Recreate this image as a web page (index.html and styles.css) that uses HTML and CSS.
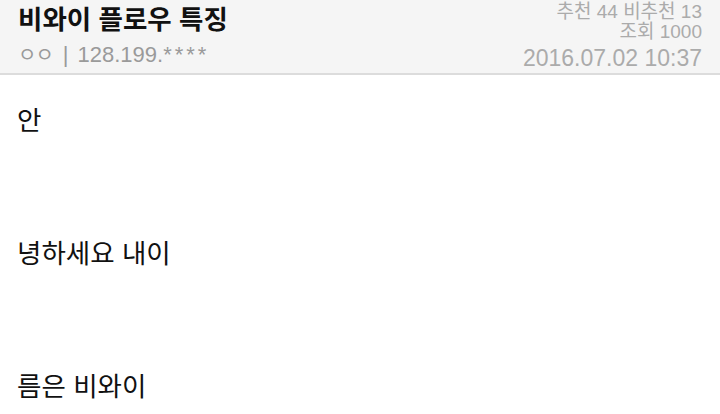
FILE: index.html
```html
<!DOCTYPE html>
<html lang="ko">
  <head>
    <meta charset="UTF-8" />
    <meta name="viewport" content="width=device-width, initial-scale=1.0" />
    <link rel="stylesheet" href="styles.css">
    <title>비와이 플로우 특징</title>
  </head>
  <body>
    <div class="post-head">
      <div class="head-left">
        <h1 class="post-title">비와이 플로우 특징</h1>
        <div class="post-writer"><span class="nick">ㅇㅇ</span><span class="bar">|</span>128.199.<span class="mask">****</span></div>
      </div>
      <div class="head-right">
        <div class="count">추천 44 비추천 13</div>
        <div class="count">조회 1000</div>
        <div class="post-date">2016.07.02 10:37</div>
      </div>
    </div>

    <div class="post-body">
      <p>안</p>
      <p>녕하세요 내이</p>
      <p>름은 비와이</p>
    </div>
  </body>
</html>
```

FILE: styles.css
```css
body {
    margin: 0;
    background: #fff;
    font-family: "Liberation Sans", "Noto Sans CJK KR", sans-serif;
    color: #111;
    overflow: hidden;
}

/* 글 상단 정보 영역 */
.post-head {
    display: flex;
    justify-content: space-between;
    height: 73px;
    padding: 0 18px;
    background: #f5f5f5;
    border-bottom: 2px solid #dcdcdc;
}
.post-title {
    margin: 0;
    font-family: "Noto Sans CJK KR", sans-serif;
    font-size: 26.5px;
    font-weight: 700;
    line-height: 36px;
    color: #111;
}
.post-writer {
    margin-top: 4px;
    font-size: 22px;
    line-height: 30px;
    color: #9a9a9a;
}
.post-writer .nick {
    font-size: 20px;
    letter-spacing: -1px;
}
.post-writer .bar {
    margin: 0 9px 0 10px;
}
.post-writer .mask {
    letter-spacing: 3px;
}

.head-right {
    text-align: right;
    color: #ababab;
}
.count {
    font-size: 19px;
    line-height: 20px;
}
.count:first-child {
    margin-top: 2px;
}
.post-date {
    margin-top: 1px;
    font-size: 23px;
    line-height: 30px;
}

/* 본문 */
.post-body {
    padding: 22px 17px 0;
    font-family: "Noto Sans CJK KR", sans-serif;
    font-size: 26.5px;
    line-height: 44px;
    color: #111;
}
.post-body p {
    margin: 0 0 89px;
}
```
